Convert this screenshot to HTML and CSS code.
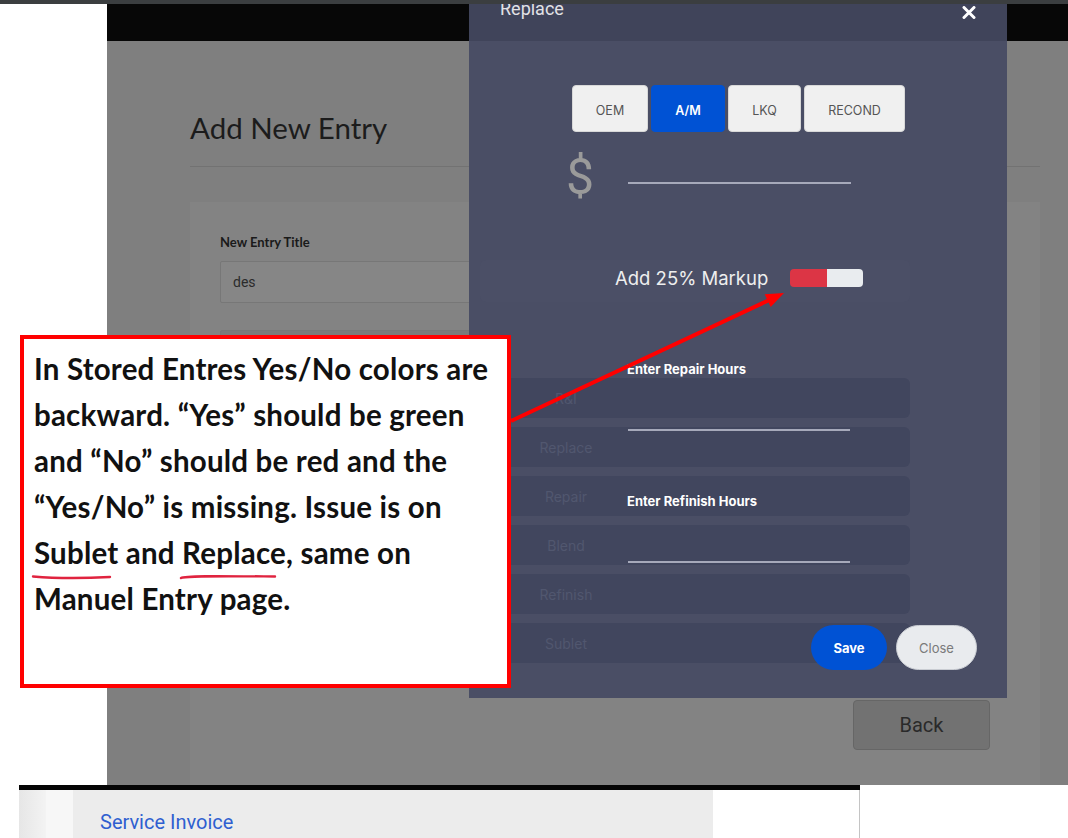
FILE: index.html
```html
<!DOCTYPE html>
<html lang="en">
<head>
<meta charset="utf-8">
<title>Add New Entry</title>
<link rel="stylesheet" href="styles.css">
</head>
<body>
<div class="chrome"></div>
<div class="page">
  <aside class="gutter"></aside>
  <div class="app">
    <div class="navbar"></div>
    <main class="content">
      <h1 class="title">Add New Entry</h1>
      <div class="rule"></div>
      <section class="card">
        <div class="label">New Entry Title</div>
        <div class="field">des</div>
        <div class="field field-dark"></div>
        <div class="actions"><button class="back">Back</button></div>
      </section>
    </main>
  </div>
</div>
<footer class="strip">
  <div class="shade"></div>
  <div class="side"></div>
  <div class="invoice">Service Invoice</div>
  <div class="blank"></div>
</footer>

<div class="modal">
  <div class="modal-head">
    <span class="modal-title">Replace</span>
    <svg class="modal-x" width="14" height="13" viewBox="0 0 14 13"><path d="M2 1.5 L12 11.5 M12 1.5 L2 11.5" stroke="#ffffff" stroke-width="3" stroke-linecap="round"/></svg>
  </div>
  <div class="modal-body">
    <div class="rows">
      <div class="row row-faint"></div>
      <div class="row"><span class="row-label">R&amp;I</span></div>
      <div class="row"><span class="row-label">Replace</span></div>
      <div class="row"><span class="row-label">Repair</span></div>
      <div class="row"><span class="row-label">Blend</span></div>
      <div class="row"><span class="row-label">Refinish</span></div>
      <div class="row"><span class="row-label">Sublet</span></div>
    </div>
    <div class="front">
      <div class="types">
        <button class="type t-oem">OEM</button>
        <button class="type t-am active">A/M</button>
        <button class="type t-lkq">LKQ</button>
        <button class="type t-recond">RECOND</button>
      </div>
      <div class="price">
        <span class="dollar">$</span>
        <span class="line price-line"></span>
      </div>
      <div class="markup">
        <span class="markup-text">Add 25% Markup</span>
        <span class="toggle"><span class="toggle-on"></span><span class="toggle-off"></span></span>
      </div>
      <div class="hours-label hl-repair">Enter Repair Hours</div>
      <div class="line hours-line"></div>
      <div class="hours-label hl-refinish">Enter Refinish Hours</div>
      <div class="line hours-line"></div>
      <div class="modal-actions">
        <button class="save">Save</button>
        <button class="close">Close</button>
      </div>
    </div>
  </div>
</div>

<div class="note">
  <p class="note-text">In Stored Entres Yes/No colors are<br>backward. “Yes” should be green<br>and “No” should be red and the<br>“Yes/No” is missing. Issue is on<br><span class="mark">Sublet<svg class="scribble" width="82" height="8" viewBox="0 0 82 8"><path d="M2 4.5 C 20 6, 50 6.5, 79 5" stroke="#e0233f" stroke-width="2.4" fill="none" stroke-linecap="round"/></svg></span> and <span class="mark">Replace<svg class="scribble" width="100" height="8" viewBox="0 0 100 8"><path d="M2 6 C 6 3.5, 40 4, 96 4.5" stroke="#e0233f" stroke-width="2.4" fill="none" stroke-linecap="round"/></svg></span>, same on<br>Manuel Entry page.</p>
</div>

<svg class="arrow" width="300" height="150" viewBox="0 0 300 150">
  <line x1="5" y1="136" x2="262" y2="15.6" stroke="#ff0000" stroke-width="4"/>
  <polygon points="278,8 264.7,21.9 258.7,9.3" fill="#ff0000"/>
</svg>
</body>
</html>
```

FILE: styles.css
```css
* { box-sizing: border-box; }
html, body { margin: 0; padding: 0; }
body {
  width: 1068px;
  height: 838px;
  overflow: hidden;
  background: #ffffff;
  font-family: Roboto, "Liberation Sans", sans-serif;
  position: relative;
}
button { font-family: inherit; cursor: pointer; }

.chrome {
  height: 4px;
  background: #3b3e40;
  position: relative;
  z-index: 5;
}

.page {
  display: flex;
  height: 781px;
}
.gutter {
  width: 107px;
  background: #ffffff;
}
.app {
  flex: 1;
  display: flex;
  flex-direction: column;
}
.navbar {
  height: 37px;
  background: #070707;
}
.content {
  flex: 1;
  background: #7f7f7f;
  padding: 70px 28px 0 83px;
  overflow: hidden;
}
.title {
  margin: 0;
  font-family: Lato, "Open Sans", sans-serif;
  font-weight: 400;
  font-size: 29.5px;
  line-height: 34px;
  color: #1c1c1c;
}
.rule {
  margin-top: 21px;
  height: 1px;
  background: #727272;
}
.card {
  margin-top: 35px;
  background: #838383;
  padding: 32px 50px 40px 30px;
  height: 600px;
}
.label {
  font-family: Lato, "Open Sans", sans-serif;
  font-weight: 700;
  font-size: 13px;
  line-height: 16px;
  color: #1a1a1a;
}
.field {
  margin-top: 11px;
  height: 42px;
  border: 1px solid #777777;
  background: #868686;
  border-radius: 2px;
  padding: 0 12px;
  font-size: 14px;
  line-height: 40px;
  color: #2b2b2b;
}
.field-dark {
  margin-top: 27px;
  background: #7a7a7a;
}
.actions {
  display: flex;
  justify-content: flex-end;
  margin-top: 328px;
}
.back {
  width: 137px;
  height: 50px;
  background: #727272;
  border: 1px solid #666666;
  border-radius: 4px;
  font-size: 20px;
  color: #2a2a2a;
}

.strip {
  display: flex;
  margin-left: 19px;
  width: 841px;
  height: 53px;
  border-top: 5px solid #050505;
}
.shade {
  width: 27px;
  background: linear-gradient(to right, #e6e6e6, #f3f3f3);
}
.side {
  width: 27px;
  background: #f7f7f7;
}
.invoice {
  width: 640px;
  background: #ececec;
  padding: 20px 0 0 27px;
  font-size: 20px;
  line-height: 24px;
  color: #2f5fd0;
}
.blank {
  flex: 1;
  background: #ffffff;
  border-right: 1px solid #c4c4c4;
}

/* Modal */
.modal {
  position: absolute;
  left: 469px;
  top: 4px;
  width: 538px;
  height: 694px;
  background: #4a4e65;
  z-index: 2;
}
.modal-head {
  height: 37px;
  background: #40445a;
  display: flex;
  align-items: flex-start;
  justify-content: space-between;
  padding: 0 31px;
  overflow: hidden;
}
.modal-title {
  margin-top: -4px;
  font-size: 18px;
  line-height: 18px;
  color: #e2e2e6;
}
.modal-x {
  margin-top: 2px;
}
.modal-body {
  position: relative;
  height: 657px;
}
.rows {
  position: absolute;
  left: 11px;
  top: 0;
  width: 430px;
  padding-top: 219px;
  display: flex;
  flex-direction: column;
  gap: 9px;
}
.row {
  height: 40px;
  background: #41465e;
  border-radius: 6px;
  display: flex;
  align-items: center;
}
.row-faint {
  height: 42px;
  background: #4b4f66;
  margin-bottom: 67px;
}
.row-label {
  width: 172px;
  text-align: center;
  font-family: Inter, Roboto, sans-serif;
  font-size: 14px;
  color: #51576f;
}
.front {
  position: absolute;
  left: 0;
  top: 0;
  width: 100%;
  display: flex;
  flex-direction: column;
}
.types {
  margin-top: 44px;
  display: flex;
  justify-content: center;
  gap: 3px;
  padding-left: 1px;
}
.type {
  height: 47px;
  border: 1px solid #d8d8d8;
  border-radius: 4px;
  background: #f0f0f0;
  font-family: Inter, Roboto, sans-serif;
  font-size: 12.5px;
  color: #555555;
  padding: 3px 0 0;
}
.t-oem { width: 76px; }
.t-am { width: 74px; }
.t-lkq { width: 73px; }
.t-recond { width: 101px; }
.type.active {
  background: #0052d4;
  border-color: #0052d4;
  color: #ffffff;
  font-weight: 600;
}
.price {
  margin-top: 21px;
  height: 44px;
  display: flex;
  align-items: center;
  padding-left: 97px;
}
.dollar {
  font-size: 50px;
  font-weight: 400;
  line-height: 44px;
  color: #9a9a9a;
  width: 62px;
  margin-top: 4px;
}
.line {
  display: block;
  height: 2px;
  background: #a6a9ba;
}
.price-line {
  width: 223px;
  align-self: flex-end;
  margin-bottom: 13px;
}
.markup {
  margin-top: 62px;
  height: 38px;
  display: flex;
  align-items: center;
  padding-left: 146px;
}
.markup-text {
  font-family: Inter, Roboto, sans-serif;
  font-size: 18.5px;
  color: #eeeeee;
  width: 175px;
}
.toggle {
  display: flex;
  width: 73px;
  height: 18px;
  border-radius: 4px;
  overflow: hidden;
}
.toggle-on { width: 37px; background: #dc3545; }
.toggle-off { flex: 1; background: #e9ecef; }
.hours-label {
  padding-left: 158px;
  font-family: Inter, Roboto, sans-serif;
  font-weight: 700;
  font-size: 13px;
  line-height: 16px;
  color: #ffffff;
}
.hl-repair { margin-top: 64px; }
.hl-refinish { margin-top: 62px; }
.hours-line {
  margin-top: 52px;
  margin-left: 159px;
  width: 222px;
}
.modal-actions {
  margin-top: 62px;
  display: flex;
  justify-content: flex-end;
  gap: 9px;
  padding-right: 30px;
}
.save, .close {
  height: 45px;
  border-radius: 23px;
  font-family: Inter, Roboto, sans-serif;
  font-size: 13px;
  padding: 0;
}
.save {
  width: 76px;
  background: #0052d4;
  border: none;
  color: #ffffff;
  font-weight: 700;
}
.close {
  width: 81px;
  background: #e9ebee;
  border: 1px solid #c9ccd2;
  color: #7a7a7a;
}

/* Annotation */
.note {
  position: absolute;
  left: 20px;
  top: 335px;
  width: 491px;
  height: 353px;
  border: 4px solid #ff0000;
  background: #ffffff;
  z-index: 3;
  padding: 7px 0 0 10px;
}
.note-text {
  margin: 0;
  font-family: Lato, "Open Sans", sans-serif;
  font-weight: 700;
  font-size: 29.5px;
  letter-spacing: 0.2px;
  line-height: 46px;
  color: #111111;
  white-space: nowrap;
}
.mark {
  position: relative;
}
.scribble {
  position: absolute;
  left: -3px;
  top: 37px;
}
.arrow {
  position: absolute;
  left: 506px;
  top: 285px;
  z-index: 4;
}
```
